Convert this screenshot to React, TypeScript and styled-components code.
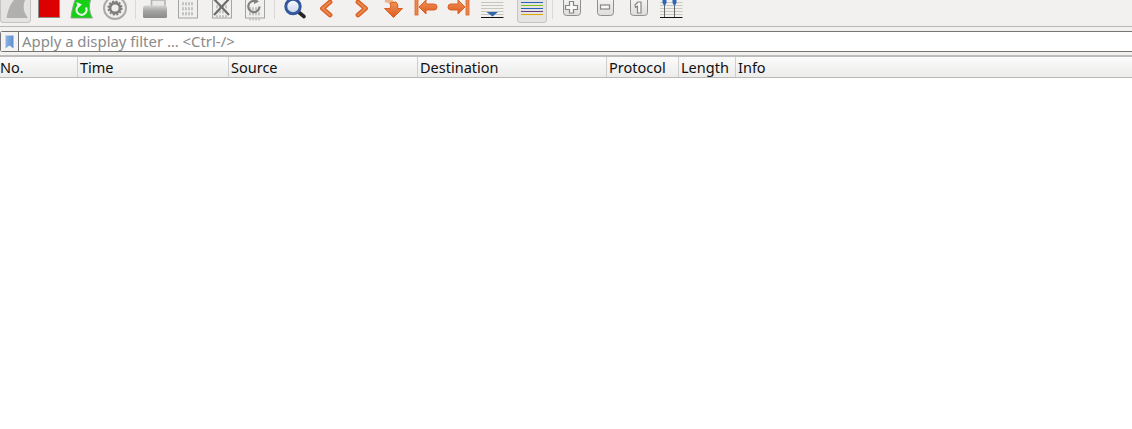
import React from "react";
import styled, { createGlobalStyle } from "styled-components";

const Global = createGlobalStyle`
  html, body { margin: 0; padding: 0; background: #fff; height: 100%; overflow: hidden; }
  #root { height: 100%; }
`;

const Window = styled.div`
  display: flex;
  flex-direction: column;
  width: 1132px;
  height: 429px;
  background: #fff;
  font-family: "Noto Sans", "Open Sans", sans-serif;
  overflow: hidden;
`;

const Toolbar = styled.div`
  display: flex;
  align-items: flex-start;
  height: 26px;
  background: #f2f1f0;
  border-bottom: 1px solid #b9b8b7;
  flex: none;
`;

const ToolButton = styled.div<{ $active?: boolean; $inset?: number }>`
  position: relative;
  flex: none;
  width: 33px;
  height: 23px;
  display: flex;
  justify-content: center;
  svg { display: block; overflow: hidden; position: relative; }
  ${(p) =>
    p.$active
      ? `
    &::before {
      content: "";
      position: absolute;
      top: -3px;
      bottom: 0;
      left: ${p.$inset ?? 0}px;
      right: 2px;
      box-sizing: border-box;
      background: #e4e3e2;
      border: 1px solid #c4c3c2;
      border-radius: 3px;
    }
  `
      : ""}
`;

const Separator = styled.div<{ $hidden?: boolean }>`
  flex: none;
  width: 7px;
  height: 19px;
  display: flex;
  justify-content: center;
  &::after {
    content: "";
    width: 1px;
    background: ${(p) => (p.$hidden ? "transparent" : "#d9d8d7")};
  }
`;

const FilterBand = styled.div`
  flex: none;
  height: 28px;
  box-sizing: border-box;
  padding-top: 4px;
  background: #f2f1f0;
`;

const FilterFrame = styled.div`
  display: flex;
  align-items: stretch;
  box-sizing: border-box;
  height: 21px;
  background: #fff;
  border: 1px solid #757575;
  border-right: none;
  border-radius: 3px 0 0 3px;
`;

const BookmarkCell = styled.div`
  flex: none;
  width: 18px;
  box-sizing: border-box;
  border-right: 1px solid #757575;
  display: flex;
  align-items: center;
  justify-content: center;
  background: #f4f4f4;
`;

const FilterText = styled.div`
  padding-left: 3px;
  color: #8a8a8a;
  font-size: 14.9px;
  line-height: 19px;
  white-space: nowrap;
`;

const HeaderTrack = styled.div`
  flex: none;
  height: 2px;
  background: #bdbcbb;
`;

const Header = styled.div`
  flex: none;
  display: flex;
  height: 21px;
  box-sizing: border-box;
  background: linear-gradient(#fbfbfb, #ececeb);
  border-bottom: 1px solid #b9b8b7;
`;

const Column = styled.div<{ $w?: number; $flush?: boolean }>`
  box-sizing: border-box;
  width: ${(p) => (p.$w ? `${p.$w}px` : "auto")};
  flex: ${(p) => (p.$w ? "none" : "1")};
  padding-left: ${(p) => (p.$flush ? 0 : 2)}px;
  border-right: ${(p) => (p.$w ? "1px solid #cfcecd" : "none")};
  color: #101010;
  font-size: 14.5px;
  line-height: 21px;
  white-space: nowrap;
  overflow: hidden;
`;

const List = styled.div`
  flex: 1;
  background: #fff;
`;

const Icon: React.FC<{ children: React.ReactNode }> = ({ children }) => (
  <svg width={33} height={23} viewBox="0 0 33 23" fill="none">
    {children}
  </svg>
);

const Bits: React.FC<{ x: number; y: number }> = ({ x, y }) => (
  <g fill="#c4c4c2">
    {[0, 5, 10].map((dy) =>
      [0, 3, 6, 9].map((dx) => (
        <rect key={`${dx}-${dy}`} x={x + dx} y={y + dy} width="2" height="3.5" rx="0.8" />
      ))
    )}
  </g>
);

const Page: React.FC<{ x: number; w?: number }> = ({ x, w = 19 }) => (
  <rect x={x + 0.5} y={-2} width={w} height={20} fill="#f0f0ef" stroke="#a4a4a3" />
);

const Chevron: React.FC<{ d: string }> = ({ d }) => (
  <>
    <path d={d} stroke="#dc5f22" strokeWidth="4.8" strokeLinecap="round" strokeLinejoin="round" />
    <path d={d} stroke="#ea8a50" strokeWidth="1.8" strokeLinecap="round" strokeLinejoin="round" />
  </>
);

const KeyButton: React.FC<{ x: number; w: number; children: React.ReactNode }> = ({ x, w, children }) => (
  <Icon>
    <rect x={x + 0.5} y="-3" width={w} height="18.5" rx="3" fill="url(#key)" stroke="#8f8f8e" />
    {children}
  </Icon>
);

export default function App() {
  return (
    <Window>
      <Global />
      <Toolbar>
        <ToolButton $active>
          <Icon>
            <path d="M15 -1H25.5C22.5 5 23 12 28 18H6.5C8 10 10.5 3 15 -1Z" fill="#b0b0af" />
          </Icon>
        </ToolButton>
        <ToolButton>
          <Icon>
            <rect x="5.5" y="-2" width="21" height="19.5" fill="#dc0000" stroke="#8c8c8b" />
          </Icon>
        </ToolButton>
        <ToolButton>
          <Icon>
            <path d="M9.5 -1H25C22.5 5 23 12 26.5 18H5C5.5 11 7.5 4 9.5 -1Z" fill="#15d015" stroke="#8f9f8f" strokeWidth="0.9" />
            <path d="M20 7.5A5 5 0 1 1 11.8 6.5" stroke="#eef8ee" strokeWidth="2.2" />
            <path d="M10.5 2L16 4.5L11.5 8.5Z" fill="#eef8ee" />
          </Icon>
        </ToolButton>
        <ToolButton>
          <Icon>
            <circle cx="16" cy="8" r="11" fill="#f0efee" stroke="#a9a9a8" strokeWidth="2" />
            <circle cx="16" cy="8" r="5" stroke="#7f7f7e" strokeWidth="2.8" />
            <circle cx="16" cy="8" r="6.8" stroke="#7f7f7e" strokeWidth="1.6" strokeDasharray="2 1.6" />
          </Icon>
        </ToolButton>
        <Separator />
        <ToolButton>
          <Icon>
            <defs>
              <linearGradient id="folder" x1="0" y1="0" x2="0" y2="1">
                <stop offset="0" stopColor="#d4d4d3" />
                <stop offset="0.45" stopColor="#a3a3a2" />
                <stop offset="1" stopColor="#8a8a89" />
              </linearGradient>
              <linearGradient id="arrow" x1="0" y1="0" x2="0" y2="1">
                <stop offset="0" stopColor="#ee9458" />
                <stop offset="1" stopColor="#de5a1e" />
              </linearGradient>
              <linearGradient id="key" x1="0" y1="0" x2="0" y2="1">
                <stop offset="0" stopColor="#f6f6f5" />
                <stop offset="1" stopColor="#dedddc" />
              </linearGradient>
              <linearGradient id="lens" x1="0" y1="0" x2="0" y2="1">
                <stop offset="0" stopColor="#ffffff" />
                <stop offset="1" stopColor="#c4d3ea" />
              </linearGradient>
              <linearGradient id="mark" x1="0" y1="0" x2="1" y2="0">
                <stop offset="0" stopColor="#8db3e4" />
                <stop offset="1" stopColor="#5f8fd0" />
              </linearGradient>
            </defs>
            <path d="M12.5 6V0H26V6" stroke="#b4b4b3" strokeWidth="1.6" fill="#e9e9e8" />
            <path d="M4 8Q4 5.5 6 5.5H26Q28 5.5 28 8V16.5Q28 18 26.5 18H5.5Q4 18 4 16.5Z" fill="url(#folder)" />
          </Icon>
        </ToolButton>
        <ToolButton>
          <Icon>
            <Page x={6} />
            <Bits x={10} y={2} />
          </Icon>
        </ToolButton>
        <ToolButton>
          <Icon>
            <Page x={7} />
            <Bits x={11} y={5} />
            <path d="M9 -1L24 15M24 -1L9 15" stroke="#6d6d6c" strokeWidth="2.2" />
          </Icon>
        </ToolButton>
        <ToolButton>
          <Icon>
            <Page x={7} />
            <Bits x={11} y={7} />
            <path d="M21.5 6.5A5.6 5.6 0 1 1 17 1" stroke="#808080" strokeWidth="2.2" />
            <path d="M16 -2L21 1.5L16 4Z" fill="#808080" />
          </Icon>
        </ToolButton>
        <Separator />
        <ToolButton>
          <Icon>
            <path d="M20.5 12L26 16.5" stroke="#262626" strokeWidth="3.6" strokeLinecap="round" />
            <circle cx="15" cy="6.5" r="7.2" fill="url(#lens)" stroke="#34589e" strokeWidth="3" />
          </Icon>
        </ToolButton>
        <ToolButton>
          <Icon>
            <Chevron d="M19 2L11.5 8.5L19 15" />
          </Icon>
        </ToolButton>
        <ToolButton>
          <Icon>
            <Chevron d="M14 2L21.5 8.5L14 15" />
          </Icon>
        </ToolButton>
        <ToolButton>
          <Icon>
            <path d="M8 0Q16 1 17 6V10" stroke="#efb48a" strokeWidth="4.4" />
            <path d="M7.5 8.5H13Q14.5 6 13 3L19 2Q22 5 20.5 8.5H25.5L16.5 17.5Z" fill="url(#arrow)" stroke="#dc5f22" strokeLinejoin="round" />
          </Icon>
        </ToolButton>
        <ToolButton>
          <Icon>
            <rect x="5" y="-1" width="3" height="16" fill="#e88a50" stroke="#dc5f22" strokeWidth="0.8" />
            <path d="M9 7L16 0V4H24Q27 4 27 7Q27 10 24 10H16V14Z" fill="url(#arrow)" stroke="#dc5f22" strokeLinejoin="round" />
          </Icon>
        </ToolButton>
        <ToolButton>
          <Icon>
            <rect x="23" y="-1" width="3" height="16" fill="#e88a50" stroke="#dc5f22" strokeWidth="0.8" />
            <path d="M22 7L15 0V4H8Q5 4 5 7Q5 10 8 10H15V14Z" fill="url(#arrow)" stroke="#dc5f22" strokeLinejoin="round" />
          </Icon>
        </ToolButton>
        <ToolButton>
          <Icon>
            <path d="M5 2.5H27.5M5 5.5H27.5M5 8.5H27.5M5 11.5H27.5M5 14.5H27.5" stroke="#c6c6bd" />
            <path d="M10.5 12H22L16.5 16.5Z" fill="#2f66b2" />
            <path d="M5 17.5H27.5" stroke="#111" />
          </Icon>
        </ToolButton>
        <Separator $hidden />
        <ToolButton $active $inset={1}>
          <Icon>
            <path d="M5 2.5H27" stroke="#2a62b8" />
            <path d="M5 5.5H27" stroke="#84c21a" />
            <path d="M5 8.5H27" stroke="#2a62b8" />
            <path d="M5 11.5H27" stroke="#6a3c80" />
            <path d="M5 14.5H27" stroke="#e0a800" />
          </Icon>
        </ToolButton>
        <Separator />
        <ToolButton>
          <KeyButton x={7} w={17}>
            <path d="M13.5 1.5H17.5V5.5H21.5V9.5H17.5V13H13.5V9.5H9.5V5.5H13.5Z" fill="#f8f8f8" stroke="#858584" strokeWidth="1.2" />
          </KeyButton>
        </ToolButton>
        <ToolButton>
          <KeyButton x={8} w={16}>
            <rect x="11.5" y="5" width="9" height="4" fill="#f8f8f8" stroke="#858584" strokeWidth="1.2" />
          </KeyButton>
        </ToolButton>
        <ToolButton>
          <KeyButton x={8} w={17}>
            <path d="M13 5L16 2H19V13H15.5V6L13.5 7.5Z" fill="#f8f8f8" stroke="#858584" strokeWidth="1.2" strokeLinejoin="round" />
          </KeyButton>
        </ToolButton>
        <ToolButton>
          <Icon>
            <path d="M5 2.5H27.5M5 5.5H27.5M5 8.5H27.5M5 11.5H27.5M5 14.5H27.5" stroke="#c9c9c0" />
            <path d="M5 17.5H27.5" stroke="#111" />
            <path d="M9.5 0V17M19.5 0V17" stroke="#666" />
            <path d="M7.5 -1H11.5V3L9.5 6L7.5 3ZM17.5 -1H21.5V3L19.5 6L17.5 3Z" fill="#2f66b2" />
          </Icon>
        </ToolButton>
      </Toolbar>
      <FilterBand>
        <FilterFrame>
          <BookmarkCell>
            <svg width="9" height="14" viewBox="0 0 9 14">
              <path d="M0.5 0.5H8.5V13.5L4.5 10.5L0.5 13.5Z" fill="url(#mark)" />
            </svg>
          </BookmarkCell>
          <FilterText>Apply a display filter … &lt;Ctrl-/&gt;</FilterText>
        </FilterFrame>
      </FilterBand>
      <HeaderTrack />
      <Header>
        <Column $w={78} $flush>No.</Column>
        <Column $w={151}>Time</Column>
        <Column $w={189}>Source</Column>
        <Column $w={189}>Destination</Column>
        <Column $w={72}>Protocol</Column>
        <Column $w={57}>Length</Column>
        <Column>Info</Column>
      </Header>
      <List />
    </Window>
  );
}
